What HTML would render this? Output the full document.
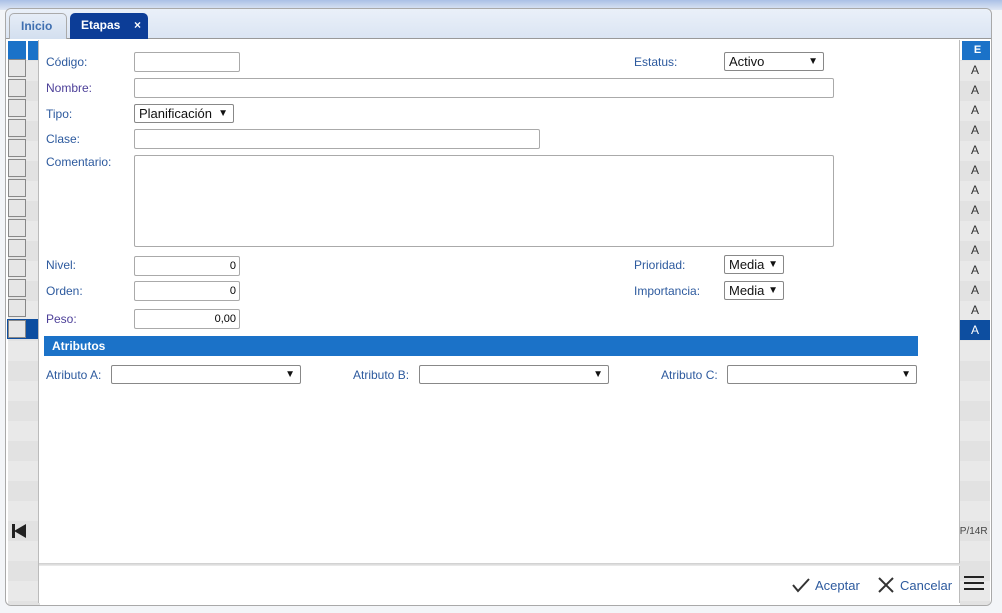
<!DOCTYPE html>
<html><head><meta charset="utf-8"><style>
*{box-sizing:border-box;margin:0;padding:0}
body{width:1002px;height:613px;overflow:hidden;background:#f3f5f8;font-family:"Liberation Sans",sans-serif;font-size:12px;position:relative}
.top{position:absolute;left:0;top:0;width:1002px;height:10px;background:linear-gradient(#aac0e6,#dfe7f4)}
.frame{position:absolute;left:5px;top:8px;width:987px;height:598px;border:1px solid #a9a9a9;border-radius:6px;background:#fff;overflow:hidden}
.tabbar{position:absolute;left:0;top:0;width:985px;height:30px;background:linear-gradient(#eaf0f9,#dbe5f3);border-bottom:1px solid #999;border-radius:6px 6px 0 0}
.tab{position:absolute;top:4px;height:26px;border-radius:5px 5px 0 0;font-weight:bold;font-size:12px;line-height:24px;padding-left:11px}
.grid{position:absolute;top:32px;height:565px;background:repeating-linear-gradient(#e2e2e2 0 20px,#e9e9e9 20px 40px)}
.dlg{position:absolute;left:38px;top:40px;width:922px;height:563px;background:#fff;border-left:1px solid #bbb;border-right:1px solid #bbb}
.lbl{position:absolute;left:7px;color:#2d5a9e;font-size:12px}
.in{position:absolute;border:1px solid #aaa;border-radius:2px;background:#fff;height:20px;font-size:11px;text-align:right;padding-right:3px;line-height:18px}
.sel{position:absolute;border:1px solid #888;border-radius:2px;background:#fff;height:19px;font-size:13px;line-height:17px;padding-left:4px;color:#111}
.sel:after{content:"▼";position:absolute;right:5px;top:0;font-size:10px}
</style></head><body>
<div class="top"></div>
<div class="frame">
 <div class="tabbar">
  <div class="tab" style="left:3px;width:58px;border:1px solid #aaa;border-bottom:none;background:linear-gradient(#e6edf7,#d3dfef);color:#3f6fb0">Inicio</div>
  <div class="tab" style="left:64px;width:78px;background:#0c3d97;color:#fff">Etapas<span style="position:absolute;right:7px">×</span></div>
 </div>
 <div class="grid" style="left:2px;width:32px">
  <div style="position:absolute;top:0;left:0;width:32px;height:19px;background:#1b72c8;border-right:2px solid #fff;"></div>
  <div style="position:absolute;top:0;left:18px;width:2px;height:19px;background:#fff"></div>
 </div>
 <div class="grid" style="left:954px;width:30px">
  <div style="position:absolute;top:0;left:0;width:30px;height:19px;background:#1b72c8;color:#fff;font-weight:bold;font-size:11px;text-align:center;line-height:19px;border-left:2px solid #fff;padding-left:3px">E</div>
 </div>
</div>
<div style="position:absolute;left:7px;top:59px;width:32px;height:280px">
 <div style="position:absolute;top:0;left:1px;width:18px;height:18px;border:1px solid #888;background:#e6e6e6"></div>
 <div style="position:absolute;top:20px;left:1px;width:18px;height:18px;border:1px solid #888;background:#e6e6e6"></div>
 <div style="position:absolute;top:40px;left:1px;width:18px;height:18px;border:1px solid #888;background:#e6e6e6"></div>
 <div style="position:absolute;top:60px;left:1px;width:18px;height:18px;border:1px solid #888;background:#e6e6e6"></div>
 <div style="position:absolute;top:80px;left:1px;width:18px;height:18px;border:1px solid #888;background:#e6e6e6"></div>
 <div style="position:absolute;top:100px;left:1px;width:18px;height:18px;border:1px solid #888;background:#e6e6e6"></div>
 <div style="position:absolute;top:120px;left:1px;width:18px;height:18px;border:1px solid #888;background:#e6e6e6"></div>
 <div style="position:absolute;top:140px;left:1px;width:18px;height:18px;border:1px solid #888;background:#e6e6e6"></div>
 <div style="position:absolute;top:160px;left:1px;width:18px;height:18px;border:1px solid #888;background:#e6e6e6"></div>
 <div style="position:absolute;top:180px;left:1px;width:18px;height:18px;border:1px solid #888;background:#e6e6e6"></div>
 <div style="position:absolute;top:200px;left:1px;width:18px;height:18px;border:1px solid #888;background:#e6e6e6"></div>
 <div style="position:absolute;top:220px;left:1px;width:18px;height:18px;border:1px solid #888;background:#e6e6e6"></div>
 <div style="position:absolute;top:240px;left:1px;width:18px;height:18px;border:1px solid #888;background:#e6e6e6"></div>
 <div style="position:absolute;top:260px;left:0;width:32px;height:20px;background:#0d4ea0"></div>
 <div style="position:absolute;top:261px;left:1px;width:18px;height:18px;border:1px solid #888;background:#e6e6e6"></div>
</div>
<div style="position:absolute;left:960px;top:60px;width:30px;font-size:12px;color:#333;text-align:center;line-height:20px">
 <div>A</div><div>A</div><div>A</div><div>A</div><div>A</div><div>A</div><div>A</div><div>A</div><div>A</div><div>A</div><div>A</div><div>A</div><div>A</div>
 <div style="background:#0d4ea0;color:#fff">A</div>
</div>
<div style="position:absolute;left:10px;top:524px;width:0;height:0;border-top:7px solid transparent;border-bottom:7px solid transparent;border-right:12px solid #222;margin-left:4px"></div>
<div style="position:absolute;left:12px;top:524px;width:3px;height:14px;background:#222"></div>
<div style="position:absolute;left:957px;top:526px;font-size:10px;color:#444">.P/14R</div>

<div class="dlg">
 <div class="lbl" style="top:15px">Código:</div>
 <div class="in" style="left:95px;top:12px;width:106px"></div>
 <div class="lbl" style="left:595px;top:15px">Estatus:</div>
 <div class="sel" style="left:685px;top:12px;width:100px">Activo</div>
 <div class="lbl" style="top:41px;color:#4c3f98">Nombre:</div>
 <div class="in" style="left:95px;top:38px;width:700px"></div>
 <div class="lbl" style="top:67px">Tipo:</div>
 <div class="sel" style="left:95px;top:64px;width:100px">Planificación</div>
 <div class="lbl" style="top:92px">Clase:</div>
 <div class="in" style="left:95px;top:89px;width:406px"></div>
 <div class="lbl" style="top:115px">Comentario:</div>
 <div class="in" style="left:95px;top:115px;width:700px;height:92px"></div>
 <div class="lbl" style="top:218px">Nivel:</div>
 <div class="in" style="left:95px;top:216px;width:106px">0</div>
 <div class="lbl" style="left:595px;top:218px">Prioridad:</div>
 <div class="sel" style="left:685px;top:215px;width:60px">Media</div>
 <div class="lbl" style="top:244px">Orden:</div>
 <div class="in" style="left:95px;top:241px;width:106px">0</div>
 <div class="lbl" style="left:595px;top:244px">Importancia:</div>
 <div class="sel" style="left:685px;top:241px;width:60px">Media</div>
 <div class="lbl" style="top:272px;color:#4c3f98">Peso:</div>
 <div class="in" style="left:95px;top:269px;width:106px">0,00</div>
 <div style="position:absolute;left:5px;top:296px;width:874px;height:20px;background:#1b72c8;color:#fff;font-weight:bold;font-size:12px;line-height:20px;padding-left:8px">Atributos</div>
 <div class="lbl" style="top:328px">Atributo A:</div>
 <div class="sel" style="left:72px;top:325px;width:190px"></div>
 <div class="lbl" style="left:314px;top:328px">Atributo B:</div>
 <div class="sel" style="left:380px;top:325px;width:190px"></div>
 <div class="lbl" style="left:622px;top:328px">Atributo C:</div>
 <div class="sel" style="left:688px;top:325px;width:190px"></div>
 <div style="position:absolute;left:0;top:523px;width:921px;height:3px;background:linear-gradient(#ccc,#eee)"></div>
 <svg style="position:absolute;left:753px;top:537px" width="18" height="16"><path d="M1 8 L6 14 L17 2" stroke="#333" stroke-width="2" fill="none"/></svg>
 <div style="position:absolute;left:776px;top:538px;color:#2d5a9e;font-size:13px">Aceptar</div>
 <svg style="position:absolute;left:839px;top:537px" width="16" height="16"><path d="M1 1 L15 15 M15 1 L1 15" stroke="#333" stroke-width="2"/></svg>
 <div style="position:absolute;left:861px;top:538px;color:#2d5a9e;font-size:13px">Cancelar</div>
</div>
<div style="position:absolute;left:964px;top:576px;width:20px;height:2px;background:#222;box-shadow:0 6px 0 #222,0 12px 0 #222"></div>
</body></html>
